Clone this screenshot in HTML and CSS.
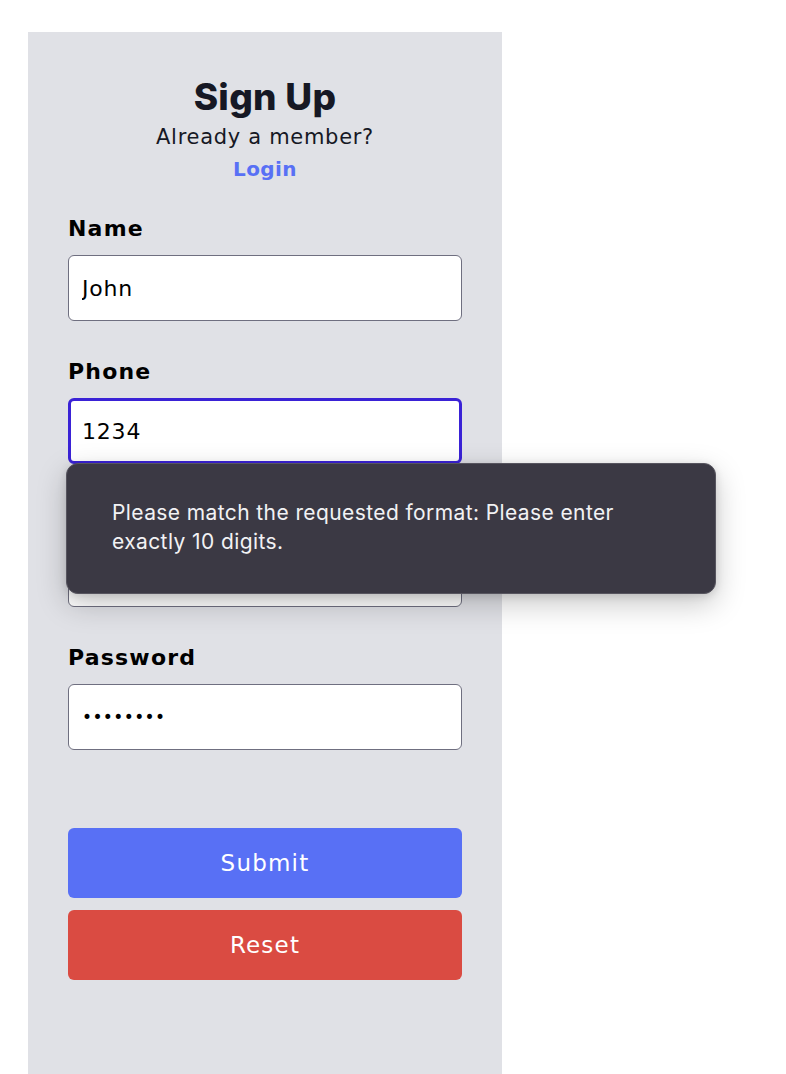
FILE: index.html
```html
<!DOCTYPE html>
<html lang="en">
<head>
<meta charset="utf-8">
<title>Sign Up</title>
<link rel="stylesheet" href="styles.css">
</head>
<body>
<div class="panel">
  <div class="header">
    <h1 class="title">Sign Up</h1>
    <p class="subtitle">Already a member?</p>
    <a class="login" href="#">Login</a>
  </div>
  <form class="form">
    <div class="field">
      <label class="label">Name</label>
      <input class="input" type="text" value="John">
    </div>
    <div class="field field-tip">
      <label class="label">Phone</label>
      <input class="input input-focus" type="text" value="1234">
      <div class="tooltip">Please match the requested format: Please enter exactly 10 digits.</div>
    </div>
    <div class="field">
      <label class="label">Email</label>
      <input class="input" type="text" value="">
    </div>
    <div class="field">
      <label class="label">Password</label>
      <input class="input input-pass" type="password" value="12345678">
    </div>
    <div class="actions">
      <button class="btn btn-submit" type="button">Submit</button>
      <button class="btn btn-reset" type="button">Reset</button>
    </div>
  </form>
</div>
</body>
</html>
```
FILE: styles.css
```css
* { box-sizing: border-box; }
html, body { margin: 0; padding: 0; background: #ffffff; }
body {
  font-family: "DejaVu Sans", "Noto Sans", sans-serif;
  color: #000;
}
.panel {
  width: 474px;
  margin: 32px 0 0 28px;
  min-height: 1042px;
  background: #e0e1e6;
  padding: 42px 40px 40px 40px;
}
.header {
  display: flex;
  flex-direction: column;
  align-items: center;
}
.title {
  margin: 0;
  font-family: "Inter", sans-serif;
  font-size: 37px;
  line-height: 46px;
  font-weight: 800;
  color: #161824;
  letter-spacing: 0.3px;
}
.subtitle {
  margin: 2px 0 0;
  font-size: 21px;
  line-height: 30px;
  font-weight: 400;
  color: #161824;
  letter-spacing: 0.7px;
}
.login {
  font-size: 20px;
  line-height: 34px;
  font-weight: 700;
  color: #5870f5;
  text-decoration: none;
  letter-spacing: 0.4px;
}
.form {
  margin-top: 28px;
  display: flex;
  flex-direction: column;
  gap: 36px;
}
.field {
  display: flex;
  flex-direction: column;
  gap: 11px;
}
.field-tip { position: relative; }
.label {
  font-size: 22px;
  line-height: 30px;
  font-weight: 700;
  color: #000;
  letter-spacing: 1.2px;
}
.input {
  width: 100%;
  height: 66px;
  border: 1px solid #6f6f80;
  border-radius: 6px;
  background: #fff;
  padding: 0 13px;
  font-family: inherit;
  font-size: 22px;
  letter-spacing: 0.8px;
  color: #000;
  outline: none;
}
.input-pass {
  font-size: 17px;
  letter-spacing: 0.4px;
}
.input-focus {
  border: 3px solid #3a22d6;
  padding: 0 11px;
}
.tooltip {
  position: absolute;
  left: -2px;
  top: 106px;
  width: 650px;
  height: 131px;
  background: #3b3944;
  border: 1px solid #57555f;
  border-radius: 12px;
  box-shadow: 0 10px 30px rgba(0,0,0,0.22), 0 2px 8px rgba(0,0,0,0.12);
  padding: 34px 80px 0 45px;
  font-family: "Inter", "Liberation Sans", sans-serif;
  font-size: 21px;
  line-height: 29px;
  letter-spacing: 0.4px;
  color: #f2f2f4;
  z-index: 5;
}
.actions {
  margin-top: 42px;
  display: flex;
  flex-direction: column;
  gap: 12px;
}
.btn {
  width: 100%;
  height: 70px;
  border: none;
  border-radius: 6px;
  font-family: inherit;
  font-size: 23px;
  font-weight: 400;
  letter-spacing: 1.2px;
  color: #fff;
  cursor: pointer;
}
.btn-submit { background: #5870f5; }
.btn-reset { background: #da4b42; }
```
